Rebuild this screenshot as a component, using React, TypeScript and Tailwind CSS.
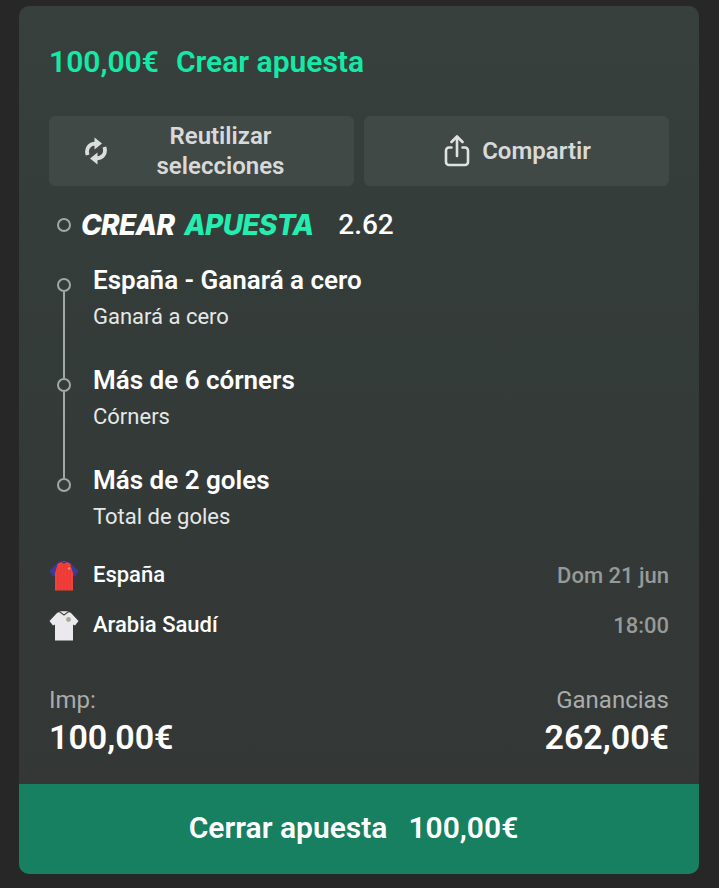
import React from 'react';

const legs = [
  { title: 'España - Ganará a cero', market: 'Ganará a cero' },
  { title: 'Más de 6 córners', market: 'Córners' },
  { title: 'Más de 2 goles', market: 'Total de goles' },
];

const ReuseIcon = () => (
  <svg width="24" height="30" viewBox="0 0 24 30" fill="none" stroke="#dcdedd" strokeWidth="3.8">
    <path d="M3.6 19C1.5 12.5 5.5 7.6 11.5 7.6" />
    <path d="M20.4 11C22.5 17.5 18.5 22.4 12.5 22.4" />
    <path d="M10.5 1.5L18 7.6L10.5 13.5Z" fill="#dcdedd" stroke="none" />
    <path d="M13.5 16.5L6 22.4L13.5 28.5Z" fill="#dcdedd" stroke="none" />
  </svg>
);

const ShareIcon = () => (
  <svg width="26" height="32" viewBox="0 0 26 32" fill="none" stroke="#e0e2e1" strokeWidth="2.6" strokeLinecap="round" strokeLinejoin="round">
    <path d="M7.5 12.5H5A3 3 0 0 0 2 15.5V27A3 3 0 0 0 5 30H21A3 3 0 0 0 24 27V15.5A3 3 0 0 0 21 12.5H18.5" />
    <path d="M13 21V2" />
    <path d="M7.5 7L13 1.5L18.5 7" />
  </svg>
);

const SpainShirt = () => (
  <svg className="mt-[4px]" width="30" height="32" viewBox="0 0 30 32">
    {/* sleeves first, the body sits over them */}
    <path d="M0.5 11L9 2.5L11 10L7 16L4 16.5Z" fill="#3d3a96" />
    <path d="M29.5 11L21 2.5L19 10L23 16L26 16.5Z" fill="#3d3a96" />
    <path d="M9 3L12 1.2H18L21 3L24 13V30.5H6V13Z" fill="#f2403a" />
    <path d="M9 6V30M12 4V30M15 4V30M18 4V30M21 6V30" stroke="#e5322f" strokeWidth="0.8" />
    <path d="M9 3L12 1.2L15 3L18 1.2L21 3" fill="none" stroke="#3d2f80" strokeWidth="1.4" />
    <circle cx="20" cy="8.5" r="1.3" fill="#f58a80" />
  </svg>
);

const SaudiShirt = () => (
  <svg className="mt-[4px]" width="30" height="32" viewBox="0 0 30 32">
    <path d="M0.5 11L8 3L12 1.2H18L22 3L29.5 11L26 15.5L24 14.5V30.5H6V14.5L4 15.5Z" fill="#ebe9ee" />
    <path d="M10.5 1.8L15 5L19.5 1.8" fill="none" stroke="#4a5048" strokeWidth="1.3" />
    <circle cx="19.5" cy="9.5" r="2.4" fill="#a9a88e" />
  </svg>
);

const Dot = () => (
  <span className="block h-[14px] w-[14px] shrink-0 rounded-full border-2 border-[#a3a7a5]" />
);

export default function App() {
  return (
    <div className="min-h-[888px] bg-[#272727] pl-[19px] pt-[6px] font-['Roboto',sans-serif]">
      <div className="h-[868px] w-[680px] flex flex-col overflow-hidden rounded-[10px] bg-gradient-to-b from-[#37403d] via-[#333a38] to-[#343635]">
        <div className="flex-1 px-[30px]">
          <div className="mt-[36px] flex h-[38px] items-center gap-[17px] text-[30px] font-semibold text-[#13eaa8]">
            <span>100,00€</span>
            <span>Crear apuesta</span>
          </div>

          <div className="mt-[36px] grid grid-cols-2 gap-[10px]">
            <button className="flex h-[70px] items-center rounded-[6px] bg-[#414947] pl-[35px] pr-[21px] text-[24px] font-semibold leading-[30px] text-[#d8dad9]">
              <ReuseIcon />
              <span className="flex-1 text-center">Reutilizar<br />selecciones</span>
            </button>
            <button className="flex h-[70px] items-center justify-center gap-[12px] rounded-[6px] bg-[#414947] pl-[2px] text-[24px] font-semibold text-[#d8dad9]">
              <ShareIcon />
              <span>Compartir</span>
            </button>
          </div>

          <div className="mt-[21px] flex h-[36px] items-center">
            <span className="ml-[8px]"><Dot /></span>
            <span className="ml-[10px] font-['Inter',sans-serif] text-[28px] font-extrabold italic tracking-[-0.7px] text-white">CREAR</span>
            <span className="ml-[10px] font-['Inter',sans-serif] text-[28px] font-extrabold italic tracking-[-0.7px] text-[#23eeb0]">APUESTA</span>
            <span className="ml-[25px] text-[28px] font-medium text-white">2.62</span>
          </div>

          <div className="mt-[12px] flex flex-col">
            {legs.map((leg, i) => (
              <div key={leg.title} className="relative h-[100px] pl-[44px]">
                <span className="absolute left-[8px] top-[23px] z-10 bg-[#353c3a]"><Dot /></span>
                {i < legs.length - 1 && (
                  <span className="absolute left-[14px] top-[37px] h-[86px] w-[2px] bg-[#a3a7a5]" />
                )}
                <div className="flex h-[50px] items-center text-[26px] font-semibold text-white">{leg.title}</div>
                <div className="-mt-[3px] text-[22px] leading-[30px] text-[#e6e8e7]">{leg.market}</div>
              </div>
            ))}
          </div>

          <div className="-mt-[6px] flex flex-col">
            <div className="flex h-[50px] items-center">
              <SpainShirt />
              <span className="ml-[14px] flex-1 text-[22px] font-medium text-white">España</span>
              <span className="pt-[2px] text-[22px] font-medium text-[#969a98]">Dom 21 jun</span>
            </div>
            <div className="flex h-[50px] items-center">
              <SaudiShirt />
              <span className="ml-[14px] flex-1 text-[22px] font-medium text-white">Arabia Saudí</span>
              <span className="pt-[2px] text-[22px] font-medium text-[#969a98]">18:00</span>
            </div>
          </div>

          <div className="mt-[36px] flex justify-between">
            <div>
              <div className="text-[24px] leading-[30px] text-[#a9acab]">Imp:</div>
              <div className="mt-[2px] text-[34px] font-semibold leading-[40px] text-white">100,00€</div>
            </div>
            <div className="text-right">
              <div className="text-[24px] leading-[30px] text-[#a9acab]">Ganancias</div>
              <div className="mt-[2px] text-[34px] font-semibold leading-[40px] text-white">262,00€</div>
            </div>
          </div>
        </div>

        <button className="flex h-[90px] shrink-0 items-center justify-center gap-[21px] bg-[#168061] pb-[4px] pr-[11px] text-[30px] font-semibold text-white">
          <span>Cerrar apuesta</span>
          <span>100,00€</span>
        </button>
      </div>
    </div>
  );
}
